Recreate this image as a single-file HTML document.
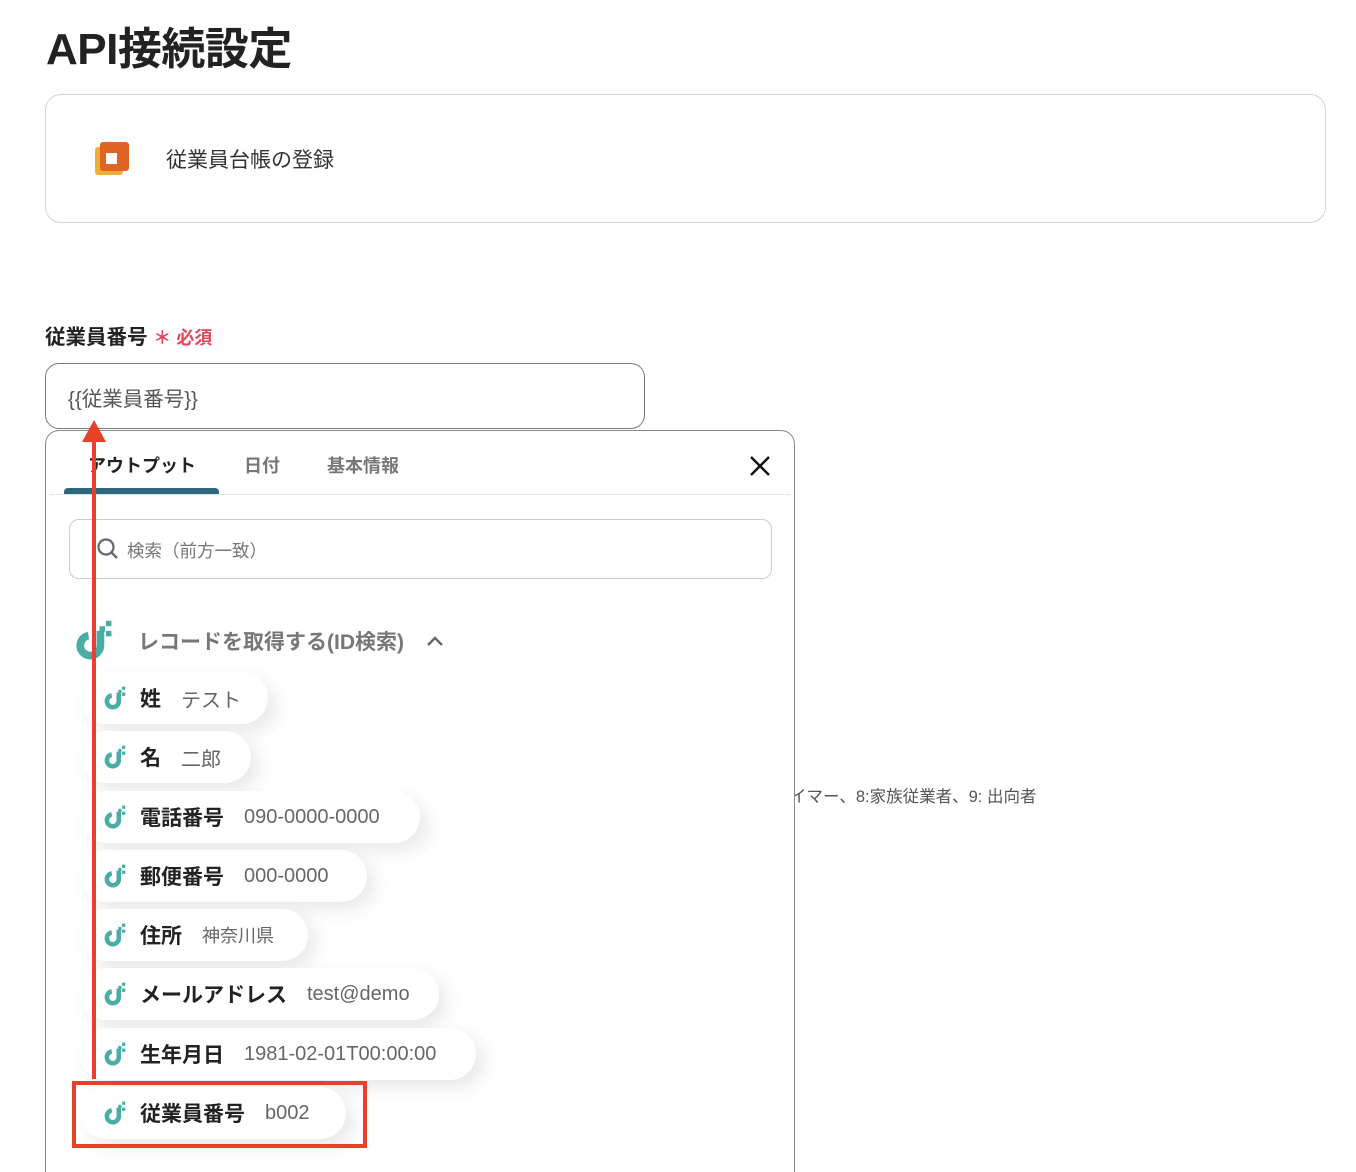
<!DOCTYPE html>
<html style="overflow:hidden;width:1356px;height:1172px"><head><meta charset="utf-8"><style>
*{box-sizing:border-box;margin:0;padding:0}
body{width:1356px;height:1172px;background:#fff;font-family:"Liberation Sans","Noto Sans CJK JP",sans-serif;position:relative;overflow:hidden;color:#333}
.abs{position:absolute}
h1{position:absolute;left:46px;top:13px;font-size:44px;font-weight:700;color:#222;letter-spacing:-0.5px}
.card{left:45px;top:94px;width:1281px;height:129px;border:1px solid #d3d3d3;border-radius:16px}
.lbl{left:45px;top:320px;font-size:20.5px;font-weight:700;color:#222}
.req{color:#e5475a;font-size:18px}
.inp{left:45px;top:363px;width:600px;height:66px;border:1px solid #7a7a7a;border-radius:14px;font-size:20.5px;color:#555;padding:18px 0 0 22px}
.panel{left:45px;top:430px;width:750px;height:760px;border:1px solid #888;border-radius:14px;background:#fff}
.tab{top:452px;font-size:18px;font-weight:700;color:#777}
.search{left:69px;top:519px;width:703px;height:60px;border:1px solid #ccc;border-radius:10px;font-size:17.5px;color:#777;padding:18px 0 0 57px}
.chip{left:80px;height:52px;border-radius:26px;background:#fff;box-shadow:8px 8px 18px rgba(0,0,0,0.09);display:flex;align-items:center;padding-left:22px;font-size:21px}
.chip b{color:#222;margin:0 20px 0 12px;font-weight:700}
.chip span{color:#666;font-size:20px}
</style></head><body>
<h1>API接続設定</h1>
<div class="abs card"></div>
<svg class="abs" style="left:94px;top:142px" width="36" height="34" viewBox="0 0 36 34"><rect x="1" y="5" width="28" height="28" rx="3" fill="#edaf3a"/><rect x="6" y="0" width="29" height="29" rx="3" fill="#e06524"/><rect x="12" y="11" width="11" height="11" fill="#fff"/></svg>
<div class="abs" style="left:166px;top:144px;font-size:21px;color:#333">従業員台帳の登録</div>
<div class="abs lbl">従業員番号 <span class="req">＊ 必須</span></div>
<div class="abs inp">{{従業員番号}}</div>
<div class="abs" style="left:790px;top:783px;font-size:16.5px;color:#555">イマー、8:家族従業者、9: 出向者</div>
<div class="abs panel"></div>
<div class="abs tab" style="left:88px;color:#222">アウトプット</div>
<div class="abs tab" style="left:244px">日付</div>
<div class="abs tab" style="left:327px">基本情報</div>
<svg class="abs" style="left:749px;top:455px" width="22" height="22"><path d="M2 2L20 20M20 2L2 20" stroke="#111" stroke-width="2.4"/></svg>
<div class="abs" style="left:50px;top:494px;width:740px;height:1px;background:#e2e2e2"></div>
<div class="abs" style="left:64px;top:488px;width:155px;height:6px;background:#2e6880;border-radius:4px 4px 0 0"></div>
<div class="abs search">検索（前方一致）</div>
<svg class="abs" style="left:96px;top:537px" width="24" height="24"><circle cx="10" cy="10" r="7.5" fill="none" stroke="#666" stroke-width="2.2"/><path d="M15.5 15.5L21 21" stroke="#666" stroke-width="2.4"/></svg>
<svg class="abs" style="left:72px;top:618px" width="44" height="44" viewBox="0 0 24 24"><path d="M9 9.6A5.5 5.5 0 1 0 15.5 15V7" fill="none" stroke="#4aada5" stroke-width="4.2"/><rect x="18.5" y="1.5" width="3" height="3" fill="#4aada5"/><rect x="15" y="4.5" width="3" height="3" fill="#4aada5"/><rect x="18.5" y="7" width="3" height="3" fill="#4aada5"/></svg>
<div class="abs" style="left:138px;top:626px;font-size:21px;font-weight:700;color:#777">レコードを取得する(ID検索)</div>
<svg class="abs" style="left:426px;top:634px" width="18" height="14"><path d="M2 11L9 4L16 11" fill="none" stroke="#666" stroke-width="2.4"/></svg>

<div class="abs chip" style="top:672px;width:188px"><svg width="26" height="26" viewBox="0 0 24 24"><path d="M9 9.6A5.5 5.5 0 1 0 15.5 15V7" fill="none" stroke="#4aada5" stroke-width="4.2"/><rect x="18.5" y="1.5" width="3" height="3" fill="#4aada5"/><rect x="15" y="4.5" width="3" height="3" fill="#4aada5"/><rect x="18.5" y="7" width="3" height="3" fill="#4aada5"/></svg><b>姓</b><span>テスト</span></div>
<div class="abs chip" style="top:731px;width:171px"><svg width="26" height="26" viewBox="0 0 24 24"><path d="M9 9.6A5.5 5.5 0 1 0 15.5 15V7" fill="none" stroke="#4aada5" stroke-width="4.2"/><rect x="18.5" y="1.5" width="3" height="3" fill="#4aada5"/><rect x="15" y="4.5" width="3" height="3" fill="#4aada5"/><rect x="18.5" y="7" width="3" height="3" fill="#4aada5"/></svg><b>名</b><span>二郎</span></div>
<div class="abs chip" style="top:791px;width:340px"><svg width="26" height="26" viewBox="0 0 24 24"><path d="M9 9.6A5.5 5.5 0 1 0 15.5 15V7" fill="none" stroke="#4aada5" stroke-width="4.2"/><rect x="18.5" y="1.5" width="3" height="3" fill="#4aada5"/><rect x="15" y="4.5" width="3" height="3" fill="#4aada5"/><rect x="18.5" y="7" width="3" height="3" fill="#4aada5"/></svg><b>電話番号</b><span>090-0000-0000</span></div>
<div class="abs chip" style="top:850px;width:287px"><svg width="26" height="26" viewBox="0 0 24 24"><path d="M9 9.6A5.5 5.5 0 1 0 15.5 15V7" fill="none" stroke="#4aada5" stroke-width="4.2"/><rect x="18.5" y="1.5" width="3" height="3" fill="#4aada5"/><rect x="15" y="4.5" width="3" height="3" fill="#4aada5"/><rect x="18.5" y="7" width="3" height="3" fill="#4aada5"/></svg><b>郵便番号</b><span>000-0000</span></div>
<div class="abs chip" style="top:909px;width:228px"><svg width="26" height="26" viewBox="0 0 24 24"><path d="M9 9.6A5.5 5.5 0 1 0 15.5 15V7" fill="none" stroke="#4aada5" stroke-width="4.2"/><rect x="18.5" y="1.5" width="3" height="3" fill="#4aada5"/><rect x="15" y="4.5" width="3" height="3" fill="#4aada5"/><rect x="18.5" y="7" width="3" height="3" fill="#4aada5"/></svg><b>住所</b><span style="font-size:18px">神奈川県</span></div>
<div class="abs chip" style="top:968px;width:359px"><svg width="26" height="26" viewBox="0 0 24 24"><path d="M9 9.6A5.5 5.5 0 1 0 15.5 15V7" fill="none" stroke="#4aada5" stroke-width="4.2"/><rect x="18.5" y="1.5" width="3" height="3" fill="#4aada5"/><rect x="15" y="4.5" width="3" height="3" fill="#4aada5"/><rect x="18.5" y="7" width="3" height="3" fill="#4aada5"/></svg><b>メールアドレス</b><span>test@demo</span></div>
<div class="abs chip" style="top:1028px;width:396px"><svg width="26" height="26" viewBox="0 0 24 24"><path d="M9 9.6A5.5 5.5 0 1 0 15.5 15V7" fill="none" stroke="#4aada5" stroke-width="4.2"/><rect x="18.5" y="1.5" width="3" height="3" fill="#4aada5"/><rect x="15" y="4.5" width="3" height="3" fill="#4aada5"/><rect x="18.5" y="7" width="3" height="3" fill="#4aada5"/></svg><b>生年月日</b><span>1981-02-01T00:00:00</span></div>
<div class="abs chip" style="top:1087px;width:266px"><svg width="26" height="26" viewBox="0 0 24 24"><path d="M9 9.6A5.5 5.5 0 1 0 15.5 15V7" fill="none" stroke="#4aada5" stroke-width="4.2"/><rect x="18.5" y="1.5" width="3" height="3" fill="#4aada5"/><rect x="15" y="4.5" width="3" height="3" fill="#4aada5"/><rect x="18.5" y="7" width="3" height="3" fill="#4aada5"/></svg><b>従業員番号</b><span>b002</span></div>

<div class="abs" style="left:72px;top:1081px;width:295px;height:67px;border:4px solid #e8412a"></div>
<div class="abs" style="left:92px;top:438px;width:4px;height:641px;background:#e8412a"></div>
<svg class="abs" style="left:82px;top:420px" width="24" height="22"><path d="M12 0L24 22H0Z" fill="#e8412a"/></svg>
</body></html>
